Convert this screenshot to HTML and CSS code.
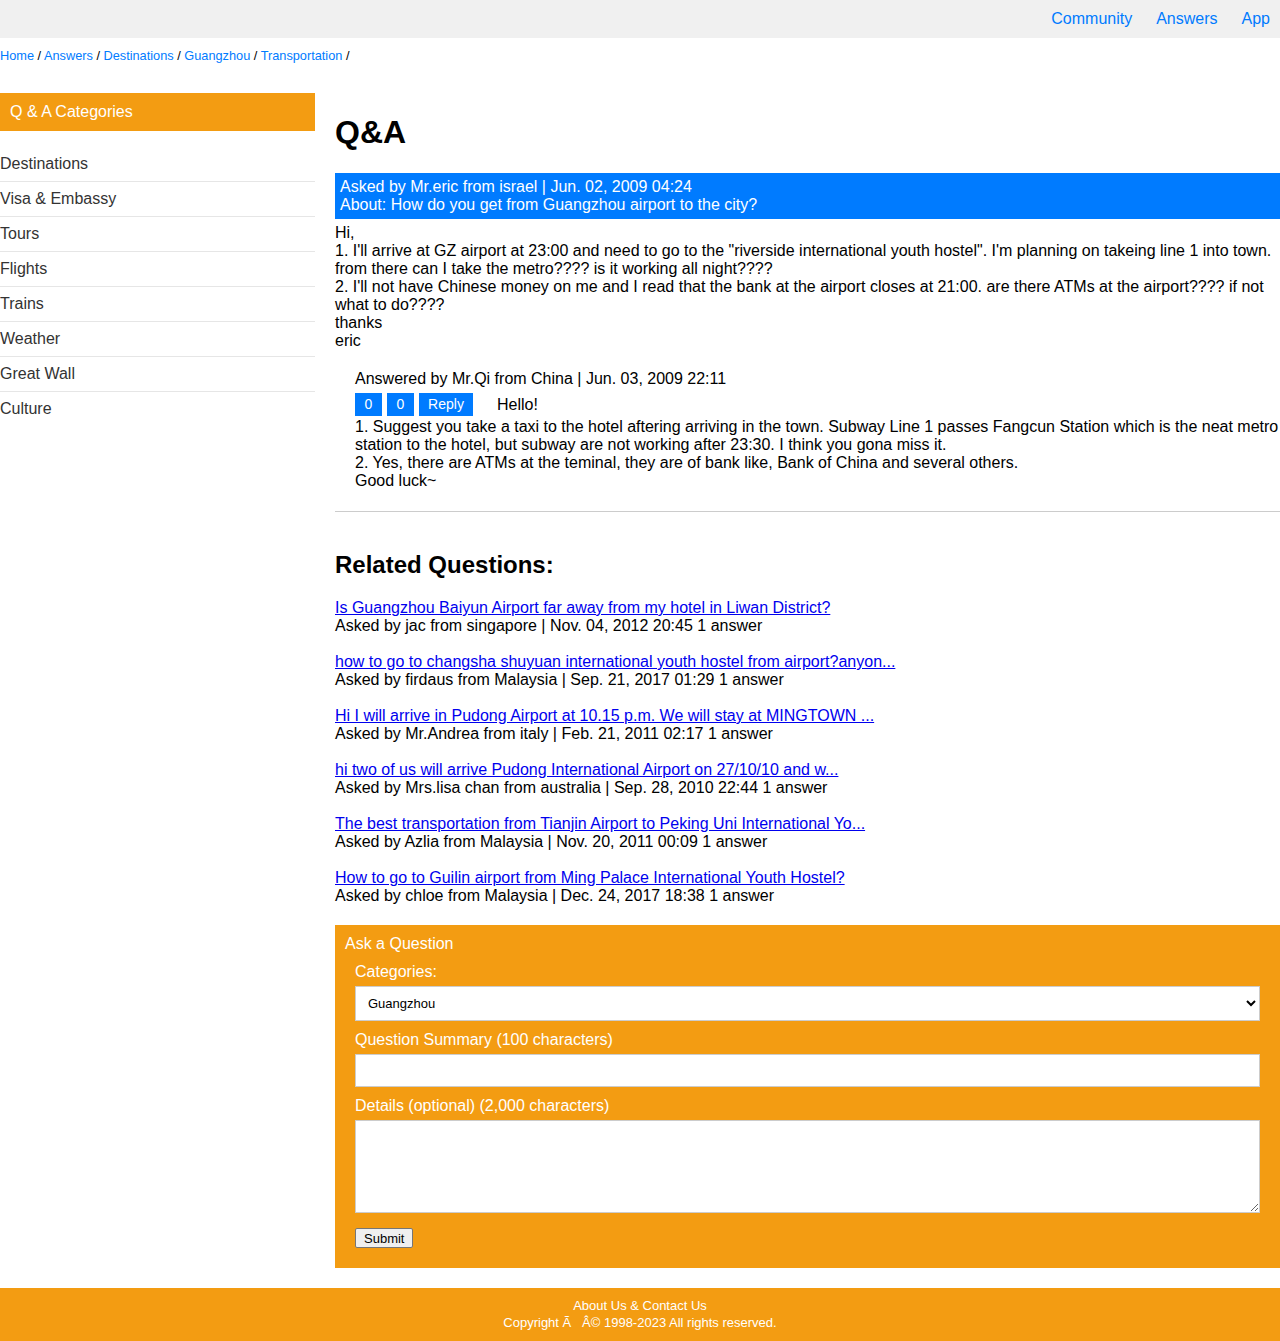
FILE: index.html
```html
<!DOCTYPE html>
<html>
<head>
<meta charset="utf-8">
<title>Q&amp;A</title>
<link rel="stylesheet" href="styles.css">
</head>
<body>
<div class="topbar">
  <a href="#">Community</a>
  <a href="#">Answers</a>
  <a href="#">App</a>
</div>
<div class="crumbs">
  <a href="#">Home</a> / <a href="#">Answers</a> / <a href="#">Destinations</a> / <a href="#">Guangzhou</a> / <a href="#">Transportation</a> /
</div>
<div class="layout">
  <aside class="sidebar">
    <div class="side-head">Q &amp; A Categories</div>
    <ul class="side-list">
      <li>Destinations</li>
      <li>Visa &amp; Embassy</li>
      <li>Tours</li>
      <li>Flights</li>
      <li>Trains</li>
      <li>Weather</li>
      <li>Great Wall</li>
      <li>Culture</li>
    </ul>
  </aside>
  <main class="main">
    <h1 class="title">Q&amp;A</h1>
    <div class="ask-head">
      <div>Asked by Mr.eric from israel | Jun. 02, 2009 04:24</div>
      <div>About: How do you get from Guangzhou airport to the city?</div>
    </div>
    <div class="question">
      Hi,<br>
      1. I'll arrive at GZ airport at 23:00 and need to go to the "riverside international youth hostel". I'm planning on takeing line 1 into town. from there can I take the metro???? is it working all night????<br>
      2. I'll not have Chinese money on me and I read that the bank at the airport closes at 21:00. are there ATMs at the airport???? if not what to do????<br>
      thanks<br>
      eric
    </div>
    <div class="answer">
      <div class="answer-meta">Answered by Mr.Qi from China | Jun. 03, 2009 22:11</div>
      <div class="answer-row">
        <span class="btn num">0</span>
        <span class="btn num">0</span>
        <span class="btn reply">Reply</span>
        <span class="hello">Hello!</span>
      </div>
      <div class="answer-body">
        1. Suggest you take a taxi to the hotel aftering arriving in the town. Subway Line 1 passes Fangcun Station which is the neat metro station to the hotel, but subway are not working after 23:30. I think you gona miss it.<br>
        2. Yes, there are ATMs at the teminal, they are of bank like, Bank of China and several others.<br>
        Good luck~
      </div>
    </div>
    <hr class="divider">
    <h2 class="related-title">Related Questions:</h2>
    <ul class="related">
      <li><a href="#">Is Guangzhou Baiyun Airport far away from my hotel in Liwan District?</a><br>Asked by jac from singapore | Nov. 04, 2012 20:45 1 answer</li>
      <li><a href="#">how to go to changsha shuyuan international youth hostel from airport?anyon...</a><br>Asked by firdaus from Malaysia | Sep. 21, 2017 01:29 1 answer</li>
      <li><a href="#">Hi I will arrive in Pudong Airport at 10.15 p.m. We will stay at MINGTOWN ...</a><br>Asked by Mr.Andrea from italy | Feb. 21, 2011 02:17 1 answer</li>
      <li><a href="#">hi two of us will arrive Pudong International Airport on 27/10/10 and w...</a><br>Asked by Mrs.lisa chan from australia | Sep. 28, 2010 22:44 1 answer</li>
      <li><a href="#">The best transportation from Tianjin Airport to Peking Uni International Yo...</a><br>Asked by Azlia from Malaysia | Nov. 20, 2011 00:09 1 answer</li>
      <li><a href="#">How to go to Guilin airport from Ming Palace International Youth Hostel?</a><br>Asked by chloe from Malaysia | Dec. 24, 2017 18:38 1 answer</li>
    </ul>
    <form class="ask-form">
      <div class="form-title">Ask a Question</div>
      <div class="form-body">
        <label class="lbl">Categories:</label>
        <select class="sel"><option>Guangzhou</option></select>
        <label class="lbl">Question Summary (100 characters)</label>
        <input class="inp" type="text">
        <label class="lbl">Details (optional) (2,000 characters)</label>
        <textarea class="txt"></textarea>
        <div class="submit-row"><button class="submit" type="button">Submit</button></div>
      </div>
    </form>
  </main>
</div>
<footer class="footer">
  <div>About Us &amp; Contact Us</div>
  <div>Copyright Ã&nbsp;&nbsp;&nbsp;Â© 1998-2023 All rights reserved.</div>
</footer>
</body>
</html>
```
FILE: styles.css
```css
html, body {
  margin: 0;
  padding: 0;
}
body {
  font-family: "Liberation Sans", Arial, sans-serif;
  font-size: 16px;
  color: #000;
  background: #fff;
}
.topbar {
  height: 38px;
  background: #f0f0f0;
  display: flex;
  justify-content: flex-end;
  align-items: center;
  gap: 24px;
  padding-right: 10px;
}
.topbar a {
  color: #007bff;
  text-decoration: none;
  font-size: 16px;
}
.crumbs {
  font-size: 12.75px;
  line-height: 15px;
  padding: 10px 0 0;
  height: 45px;
  box-sizing: border-box;
}
.crumbs a {
  color: #007bff;
  text-decoration: none;
}
.layout {
  display: flex;
  gap: 20px;
  margin-top: 10px;
}
.sidebar {
  width: 315px;
  flex: none;
}
.side-head {
  background: #f39c12;
  color: #fff;
  height: 38px;
  line-height: 38px;
  padding-left: 10px;
  font-size: 16px;
}
.side-list {
  list-style: none;
  margin: 16px 0 0;
  padding: 0;
}
.side-list li {
  height: 35px;
  line-height: 34px;
  border-bottom: 1px solid #e6e6e6;
  box-sizing: border-box;
  color: #333;
  font-size: 16px;
}
.side-list li:last-child {
  border-bottom: none;
}
.main {
  flex: 1;
  min-width: 0;
}
.title {
  font-size: 32px;
  line-height: 37px;
  margin: 21px 0 22px;
  font-weight: bold;
}
.ask-head {
  background: #007bff;
  color: #fff;
  padding: 5px;
  line-height: 18px;
}
.question {
  line-height: 18px;
  margin-top: 5px;
}
.answer {
  padding-left: 20px;
  margin-top: 20px;
  line-height: 18px;
}
.answer-row {
  display: flex;
  align-items: center;
  gap: 5px;
  margin-top: 5px;
  height: 23px;
}
.answer-body {
  margin-top: 2px;
}
.btn {
  background: #007bff;
  color: #fff;
  font-size: 14px;
  height: 23px;
  line-height: 23px;
  text-align: center;
  display: inline-block;
}
.btn.num {
  width: 27px;
}
.btn.reply {
  width: 54px;
}
.hello {
  margin-left: 19px;
}
.divider {
  border: none;
  border-top: 1px solid #ccc;
  margin: 21px 0 0;
  height: 0;
}
.related-title {
  font-size: 24px;
  line-height: 28px;
  margin: 39px 0 20px;
}
.related {
  list-style: none;
  margin: 0;
  padding: 0;
  line-height: 18px;
}
.related li {
  margin-bottom: 18px;
}
.related li:last-child {
  margin-bottom: 0;
}
.related a {
  color: #0000ee;
  text-decoration: underline;
}
.ask-form {
  margin-top: 20px;
  background: #f39c12;
  color: #fff;
  padding: 10px 0 20px;
}
.form-title {
  padding-left: 10px;
  line-height: 18px;
}
.form-body {
  padding: 0 20px;
  display: flex;
  flex-direction: column;
}
.lbl {
  display: block;
  line-height: 18px;
  margin-top: 10px;
}
.sel {
  margin-top: 5px;
  height: 35px;
  width: 100%;
  background: #fff;
  border: 1px solid #ccc;
  font-family: "Liberation Sans", Arial, sans-serif;
  font-size: 13px;
  padding: 0 8px;
  color: #000;
}
.inp {
  margin-top: 5px;
  height: 33px;
  width: 100%;
  box-sizing: border-box;
  border: 1px solid #ccc;
  background: #fff;
}
.txt {
  margin-top: 5px;
  height: 93px;
  width: 100%;
  box-sizing: border-box;
  border: 1px solid #ccc;
  background: #fff;
  resize: vertical;
}
.submit-row {
  margin-top: 15px;
}
.submit {
  font-family: "Liberation Sans", Arial, sans-serif;
  font-size: 13px;
  height: 20px;
  padding: 0 8px;
  background: #efefef;
  border: 1px solid #767676;
  border-radius: 2px;
  color: #000;
}
.footer {
  margin-top: 20px;
  background: #f39c12;
  color: #fff;
  text-align: center;
  font-size: 13px;
  line-height: 17px;
  padding: 9px 0 10px;
}
```
